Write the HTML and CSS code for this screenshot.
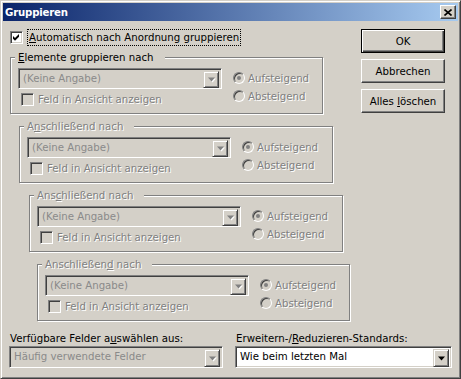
FILE: index.html
```html
<!DOCTYPE html>
<html lang="de">
<head>
    <meta charset="UTF-8">
    <title>Gruppieren</title>
    <link rel="stylesheet" href="styles.css">
</head>
<body>
<div class="window">
    <div class="titlebar">
        <span class="title">Gruppieren</span>
        <span class="close-btn">
            <svg width="8" height="7" viewBox="0 0 8 7"><path d="M0.5 0.5 L7.5 6.5 M7.5 0.5 L0.5 6.5" stroke="#000" stroke-width="1.6"/></svg>
        </span>
    </div>

    <div class="content">
        <div class="top">
            <div class="groups">
                <label class="auto-row">
                    <span class="checkbox checked">
                        <svg width="7" height="7" viewBox="0 0 7 7"><path d="M0 2 L2 4 L6 0 V2.8 L2 6.8 L0 4.8 Z" fill="#000"/></svg>
                    </span>
                    <span class="focus"><u>A</u>utomatisch nach Anordnung gruppieren</span>
                </label>

                <fieldset class="group g1">
                    <legend><u>E</u>lemente gruppieren nach</legend>
                    <div class="combo disabled"><span class="combo-text">(Keine Angabe)</span><span class="combo-arrow"><svg width="7" height="5" viewBox="0 0 7 5"><path d="M0 0.5 H7 L3.5 4.5 Z" fill="#808080"/></svg></span></div>
                    <div class="radios">
                        <span class="radio-row"><span class="radio checked"></span><span class="dim">Aufsteigend</span></span>
                        <span class="radio-row"><span class="radio"></span><span class="dim">Absteigend</span></span>
                    </div>
                    <span class="check-row"><span class="checkbox off"></span><span class="dim">Feld in Ansicht anzeigen</span></span>
                </fieldset>

                <fieldset class="group g2">
                    <legend class="dim">A<u>n</u>schließend nach</legend>
                    <div class="combo disabled"><span class="combo-text">(Keine Angabe)</span><span class="combo-arrow"><svg width="7" height="5" viewBox="0 0 7 5"><path d="M0 0.5 H7 L3.5 4.5 Z" fill="#808080"/></svg></span></div>
                    <div class="radios">
                        <span class="radio-row"><span class="radio checked"></span><span class="dim">Aufsteigend</span></span>
                        <span class="radio-row"><span class="radio"></span><span class="dim">Absteigend</span></span>
                    </div>
                    <span class="check-row"><span class="checkbox off"></span><span class="dim">Feld in Ansicht anzeigen</span></span>
                </fieldset>

                <fieldset class="group g3">
                    <legend class="dim">Ans<u>c</u>hließend nach</legend>
                    <div class="combo disabled"><span class="combo-text">(Keine Angabe)</span><span class="combo-arrow"><svg width="7" height="5" viewBox="0 0 7 5"><path d="M0 0.5 H7 L3.5 4.5 Z" fill="#808080"/></svg></span></div>
                    <div class="radios">
                        <span class="radio-row"><span class="radio checked"></span><span class="dim">Aufsteigend</span></span>
                        <span class="radio-row"><span class="radio"></span><span class="dim">Absteigend</span></span>
                    </div>
                    <span class="check-row"><span class="checkbox off"></span><span class="dim">Feld in Ansicht anzeigen</span></span>
                </fieldset>

                <fieldset class="group g4">
                    <legend class="dim">Anschließen<u>d</u> nach</legend>
                    <div class="combo disabled"><span class="combo-text">(Keine Angabe)</span><span class="combo-arrow"><svg width="7" height="5" viewBox="0 0 7 5"><path d="M0 0.5 H7 L3.5 4.5 Z" fill="#808080"/></svg></span></div>
                    <div class="radios">
                        <span class="radio-row"><span class="radio checked"></span><span class="dim">Aufsteigend</span></span>
                        <span class="radio-row"><span class="radio"></span><span class="dim">Absteigend</span></span>
                    </div>
                    <span class="check-row"><span class="checkbox off"></span><span class="dim">Feld in Ansicht anzeigen</span></span>
                </fieldset>
            </div>

            <div class="buttons">
                <button class="btn default">OK</button>
                <button class="btn">Abbrechen</button>
                <button class="btn">Alles <u>l</u>öschen</button>
            </div>
        </div>

        <div class="bottom">
            <div class="field field-left">
                <span class="field-label">Verfügbare Felder a<u>u</u>swählen aus:</span>
                <div class="combo disabled"><span class="combo-text">Häufig verwendete Felder</span><span class="combo-arrow"><svg width="7" height="5" viewBox="0 0 7 5"><path d="M0 0.5 H7 L3.5 4.5 Z" fill="#808080"/></svg></span></div>
            </div>
            <div class="field field-right">
                <span class="field-label">Erweitern-/<u>R</u>eduzieren-Standards:</span>
                <div class="combo"><span class="combo-text">Wie beim letzten Mal</span><span class="combo-arrow"><svg width="7" height="5" viewBox="0 0 7 5"><path d="M0 0.5 H7 L3.5 4.5 Z" fill="#000"/></svg></span></div>
            </div>
        </div>
    </div>
</div>
</body>
</html>
```

FILE: styles.css
```css
body { margin: 0; background: #fff; font-family: "DejaVu Sans", sans-serif; font-size: 10.2px; color: #000; }
u { text-underline-offset: 1px; }

.window { width: 461px; height: 379px; box-sizing: border-box; background: #d4d0c8; border: 1px solid; border-color: #d4d0c8 #404040 #404040 #d4d0c8; box-shadow: inset 1px 1px 0 #fff, inset -1px -1px 0 #808080; padding: 2px; display: flex; flex-direction: column; }

.titlebar { height: 18px; flex: none; display: flex; align-items: center; justify-content: space-between; padding: 0 2px; background: linear-gradient(to right, #0a246a, #a6caf0); }
.title { color: #fff; font-weight: bold; letter-spacing: -0.2px; }
.close-btn { width: 16px; height: 14px; box-sizing: border-box; display: flex; align-items: center; justify-content: center; background: #d4d0c8; border: 1px solid; border-color: #fff #404040 #404040 #fff; box-shadow: inset -1px -1px 0 #808080; }

.content { flex: 1; display: flex; flex-direction: column; padding: 8px 0 0 7px; }
.top { display: flex; justify-content: space-between; }
.groups { width: 345px; }

/* checkboxes, radios */
.checkbox { width: 13px; height: 13px; box-sizing: border-box; flex: none; display: flex; align-items: center; justify-content: center; border: 1px solid; border-color: #808080 #fff #fff #808080; box-shadow: inset 1px 1px 0 #404040, inset -1px -1px 0 #d4d0c8; }
.checkbox.checked { background: #fff; }
.checkbox.off { background: #d4d0c8; }
.radio { width: 12px; height: 12px; box-sizing: border-box; flex: none; border-radius: 50%; background: #d4d0c8; border: 1px solid; border-color: #808080 #fff #fff #808080; box-shadow: inset 1px 1px 0 #404040, inset -1px -1px 0 #d4d0c8; display: flex; align-items: center; justify-content: center; }
.radio.checked::after { content: ""; width: 4px; height: 4px; border-radius: 50%; background: #808080; }
.dim { color: #808080; text-shadow: 1px 1px 0 #fff; }

.auto-row { display: flex; align-items: center; height: 16px; }
.auto-row .focus { margin-left: 5px; padding: 1px 1px; line-height: 13px; outline: 1px dotted #000; outline-offset: 0; }

/* group boxes */
.group { margin: 6px 0 0; padding: 4px 7px 7px; min-inline-size: 0; box-sizing: border-box; width: 313px; border: 1px solid #808080; box-shadow: inset 1px 1px 0 #fff, 1px 1px 0 #fff; display: grid; grid-template-columns: 204px auto; grid-template-rows: 21px auto; column-gap: 11px; }
.group legend { margin-left: -3px; padding: 0 11px 0 3px; line-height: 13px; background: #d4d0c8; }
.group.g2 { margin-left: 9px; width: 314px; }
.group.g3 { margin-left: 19px; width: 314px; }
.group.g4 { margin-left: 27px; }

.combo { display: flex; height: 21px; box-sizing: border-box; padding: 2px; background: #fff; border: 1px solid; border-color: #808080 #fff #fff #808080; box-shadow: inset 1px 1px 0 #404040, inset -1px -1px 0 #d4d0c8; }
.combo.disabled { background: #d4d0c8; }
.combo-text { flex: 1; padding-left: 2px; line-height: 16px; white-space: nowrap; overflow: hidden; }
.combo.disabled .combo-text { color: #8a8a8a; }
.combo-arrow { width: 16px; height: 17px; box-sizing: border-box; flex: none; display: flex; align-items: center; justify-content: center; background: #d4d0c8; border: 1px solid; border-color: #d4d0c8 #404040 #404040 #d4d0c8; box-shadow: inset 1px 1px 0 #fff, inset -1px -1px 0 #808080; }
.combo.disabled .combo-arrow svg { filter: drop-shadow(1px 1px 0 #fff); }

.group .combo { grid-column: 1; grid-row: 1; }
.radios { grid-column: 2; grid-row: 1 / 3; display: flex; flex-direction: column; padding-top: 1px; }
.radio-row { display: flex; align-items: center; gap: 3px; height: 18px; }
.check-row { grid-column: 1; grid-row: 2; display: flex; align-items: center; gap: 4px; margin: 4px 0 0 3px; height: 13px; }

/* buttons */
.buttons { display: flex; flex-direction: column; gap: 6px; margin-right: 13px; }
.btn { width: 84px; height: 24px; box-sizing: border-box; padding: 0; font: inherit; color: #000; background: #d4d0c8; border: 1px solid; border-color: #fff #404040 #404040 #fff; box-shadow: inset -1px -1px 0 #808080; }
.btn.default { border-color: #000; box-shadow: inset 1px 1px 0 #fff, inset -1px -1px 0 #404040, inset -2px -2px 0 #808080; }

/* bottom fields */
.bottom { display: flex; gap: 12px; margin: 11px 0 0 -1px; }
.field { display: flex; flex-direction: column; gap: 1px; }
.field-label { padding-left: 1px; line-height: 13px; }
.field-left { width: 214px; }
.field-right { width: 217px; }
.field .combo { height: 22px; }
.field .combo-arrow { height: 18px; }
```
